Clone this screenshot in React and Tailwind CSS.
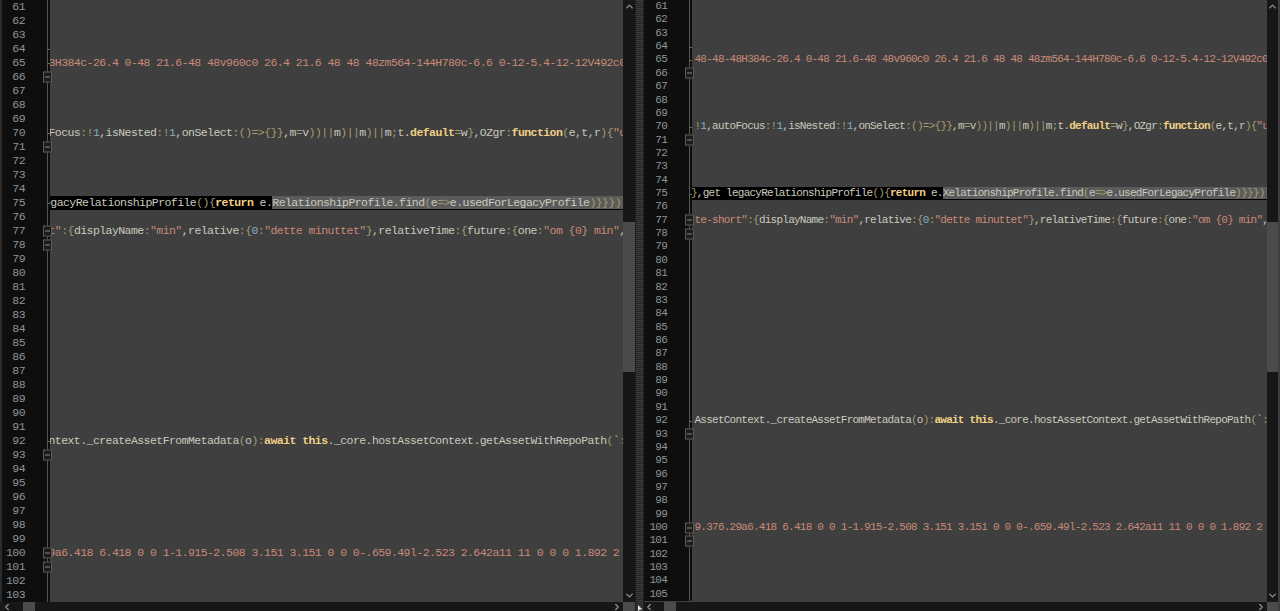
import React from "react";
import { ChevronLeft, ChevronRight, ChevronUp, ChevronDown } from "lucide-react";

const leftLines = {
  65: { path: "3H384c-26.4 0-48 21.6-48 48v960c0 26.4 21.6 48 48 48zm564-144H780c-6.6 0-12-5.4-12-12V492c0 6.6" },
  70: { code: 'Focus:!1,isNested:!1,onSelect:()=>{}},m=v))||m)||m)||m;t.default=w},OZgr:function(e,t,r){"use' },
  75: { shift: "-ml-[6px]", code: "egacyRelationshipProfile(){return e.", sel: "RelationshipProfile.find(e=>e.usedForLegacyProfile)}}}))" },
  77: { pre: 't"', code: ':{displayName:"min",relative:{0:"dette minuttet"},relativeTime:{future:{one:"om {0} min",other' },
  92: { code: "ntext._createAssetFromMetadata(o):await this._core.hostAssetContext.getAssetWithRepoPath(`:${e" },
  100: { path: "9a6.418 6.418 0 0 1-1.915-2.508 3.151 3.151 0 0 0-.659.49l-2.523 2.642a11 11 0 0 0 1.892 2 5" },
};

const rightLines = {
  65: { path: "48-48-48H384c-26.4 0-48 21.6-48 48v960c0 26.4 21.6 48 48 48zm564-144H780c-6.6 0-12-5.4-12-12V492c0 6.6" },
  70: { code: '!1,autoFocus:!1,isNested:!1,onSelect:()=>{}},m=v))||m)||m)||m;t.default=w},OZgr:function(e,t,r){"use' },
  75: { shift: "-ml-[1px]", code: "},get legacyRelationshipProfile(){return e.", sel: "XelationshipProfile.find(e=>e.usedForLegacyProfile)}}}))" },
  77: { pre: 'te-short"', code: ':{displayName:"min",relative:{0:"dette minuttet"},relativeTime:{future:{one:"om {0} min",other' },
  92: { code: "AssetContext._createAssetFromMetadata(o):await this._core.hostAssetContext.getAssetWithRepoPath(`:${e" },
  100: { path: "9.376.29a6.418 6.418 0 0 1-1.915-2.508 3.151 3.151 0 0 0-.659.49l-2.523 2.642a11 11 0 0 0 1.892 2 5" },
};

const foldBoxes = [66, 71, 77, 78, 93, 100, 101];
const foldTicks = [64, 65, 70, 75, 92];

// rough js colouring, good enough for a diff view
function highlight(str) {
  const parts = str.split(/(function|return|await|this|default|"[^"]*"|[(){}|!:=>;]|\b\d+\b)/);
  return parts.map((p, i) => {
    if (!p) return null;
    let cls = "text-[#c9c9bd]";
    if (/^(function|return|await|this|default)$/.test(p)) cls = "font-bold text-[#f0cf86]";
    else if (p[0] === '"') cls = "text-[#c98a78]";
    else if (/^\d+$/.test(p)) cls = "text-[#7fb0c8]";
    else if (/^[(){}|!:=>;]$/.test(p)) cls = "text-[#a39c6c]";
    return <span key={i} className={cls}>{p}</span>;
  });
}

function Row({ num, line, rowClass, textClass, indentClass, tallBox }) {
  const active = line && line.sel;
  return (
    <div className={`flex ${rowClass} ${textClass}`}>
      <div className="w-[48px] shrink-0 bg-[#0e0e0e] flex relative">
        <span className="w-[23px] text-right text-[#8b959b]">{num}</span>
        <div className="absolute top-0 bottom-0 left-[45px] w-px bg-[#55554f]" />
        {foldTicks.includes(num) && <div className="absolute top-1/2 left-[45px] w-[3px] h-px bg-[#6a6a64]" />}
        {foldBoxes.includes(num) && (
          <div className={`absolute left-[41px] top-1/2 -translate-y-1/2 w-[9px] ${tallBox} border border-[#5c5c56] bg-[#1b1b1b] flex items-center justify-center z-10`}>
            <div className="w-[5px] h-px bg-[#8a8a82]" />
          </div>
        )}
      </div>
      <div className={`flex-1 min-w-0 overflow-hidden whitespace-pre ${active ? "bg-black" : ""}`}>
        {line && (
          <div className={line.shift || indentClass}>
            {line.path && <span className="text-[#c98a78]">{line.path}</span>}
            {line.pre && <span className="text-[#c98a78]">{line.pre}</span>}
            {line.code && highlight(line.code)}
            {line.sel && <span className="bg-[#5b5b5b]">{highlight(line.sel)}</span>}
          </div>
        )}
      </div>
    </div>
  );
}

function Pane({ lines, from, to, widthClass, rowClass, textClass, indentClass, thumbLeftClass, scrollClass, stripClass }) {
  const nums = [];
  for (let n = from; n <= to; n++) nums.push(n);
  return (
    <div className={`${widthClass} h-full flex flex-col shrink-0`}>
      <div className="flex flex-1 min-h-0">
        {stripClass && <div className={stripClass} />}
        <div className="flex-1 min-w-0 bg-[#3f3f3f] overflow-hidden">
          {nums.map((n) => (
            <Row key={n} num={n} line={lines[n]} rowClass={rowClass} textClass={textClass} indentClass={indentClass} tallBox="h-[11px]" />
          ))}
        </div>
        <div className={`${scrollClass} shrink-0 bg-[#171717] flex flex-col items-center`}>
          <ChevronUp size={11} strokeWidth={3} className="text-[#8f8f8f] mt-[1px]" />
          <div className="w-full h-[150px] mt-[210px] bg-[#4b4b4b]" />
          <ChevronDown size={11} strokeWidth={3} className="text-[#8f8f8f] mt-auto mb-[1px]" />
        </div>
      </div>
      <div className="h-[9px] bg-[#171717] flex items-center shrink-0">
        {stripClass && <div className={stripClass} />}
        <ChevronLeft size={10} strokeWidth={3} className="text-[#8f8f8f] shrink-0" />
        <div className={`${thumbLeftClass} w-[12px] h-full bg-[#4b4b4b]`} />
        <ChevronRight size={10} strokeWidth={3} className="text-[#8f8f8f] ml-auto mr-[1px] shrink-0" />
        <div className={`${scrollClass} h-full bg-[#4b4b4b] shrink-0`} />
      </div>
    </div>
  );
}

export default function App() {
  return (
    <div className="relative w-[1280px] h-[611px] overflow-hidden flex bg-[#3f3f3f] font-['Liberation_Mono',monospace]">
      <Pane
        lines={leftLines}
        from={61}
        to={103}
        widthClass="w-[635px]"
        rowClass="h-[14px] leading-[14px]"
        textClass="text-[11.5px] tracking-[-0.56px]"
        indentClass="-ml-[1.5px]"
        thumbLeftClass="ml-[11px]"
        scrollClass="w-[12px]"
        stripClass="w-[2px] bg-[#2b2b2b] shrink-0"
      />
      <div className="w-[9px] shrink-0 bg-[#1e1e1e] px-[1px]">
        <div className="h-full bg-[repeating-linear-gradient(0deg,#3c3c3c_0px,#3c3c3c_1px,#262626_1px,#262626_2px)]" />
      </div>
      <Pane
        lines={rightLines}
        from={61}
        to={105}
        widthClass="w-[634px]"
        rowClass="h-[13.36px] leading-[13.36px]"
        textClass="text-[11px] tracking-[-0.75px]"
        indentClass="ml-[2.5px]"
        thumbLeftClass="ml-[10px]"
        scrollClass="w-[11px]"
      />
      <div className="w-[2px] shrink-0 bg-[#3f3f3f]" />
      <svg className="absolute left-[638px] top-[605px]" width="5" height="6" viewBox="0 0 5 6">
        <path d="M0 0 L0 6 L2 4.5 L4.5 4.5 Z" fill="#e8e8e8" />
      </svg>
    </div>
  );
}
